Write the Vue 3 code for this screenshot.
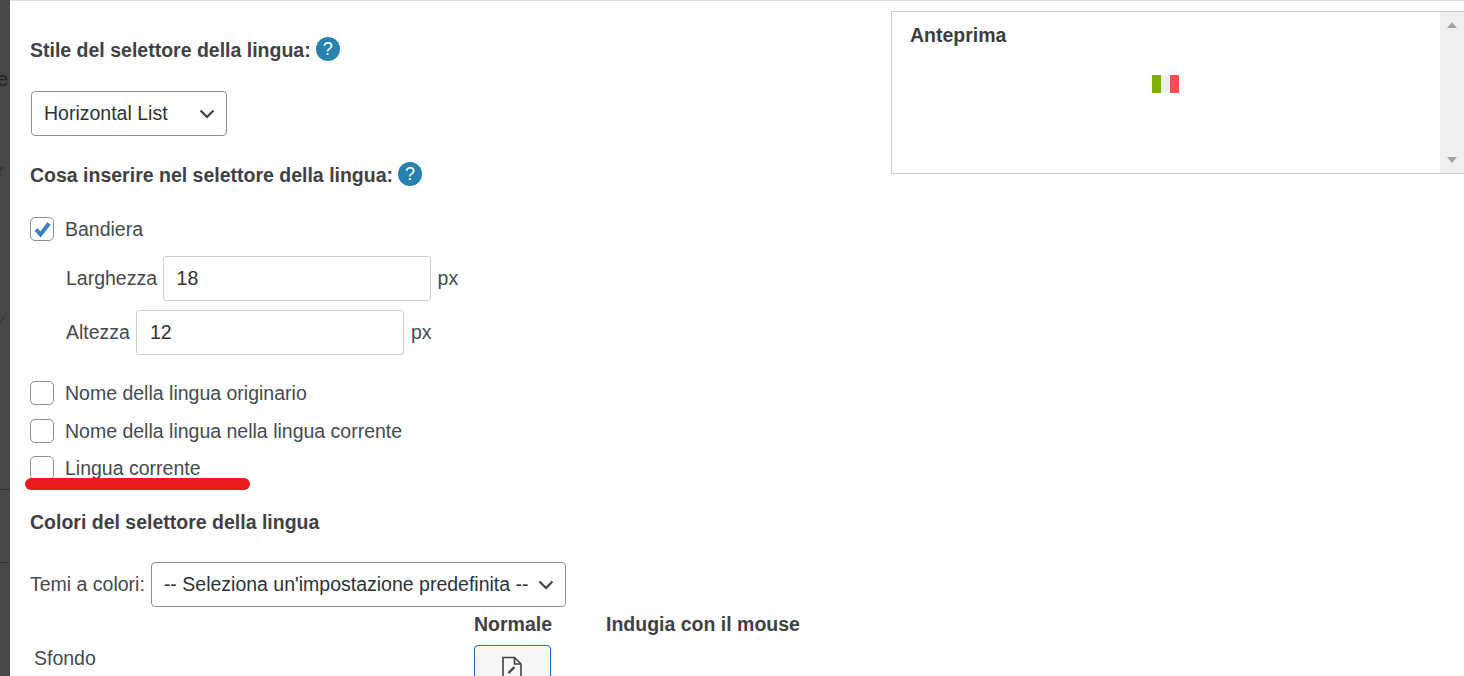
<script setup>
const plainOptions = ['Nome della lingua originario', 'Nome della lingua nella lingua corrente']
</script>

<template>
  <div class="page">
    <aside class="backdrop">
      <span class="ghost g1">e</span>
      <span class="ghost g2">r</span>
      <span class="ghost g3">✓</span>
      <i class="rule r1"></i>
      <i class="rule r2"></i>
    </aside>
    <main class="dialog">
      <section class="form">
        <h3 class="heading first">Stile del selettore della lingua:<span class="help">?</span></h3>
        <div class="select style-select">
          <span>Horizontal List</span>
          <svg class="chev" viewBox="0 0 16 10"><path d="M1.5 1.5 8 8l6.5-6.5" /></svg>
        </div>
        <h3 class="heading second">Cosa inserire nel selettore della lingua:<span class="help">?</span></h3>

        <label class="check flag-row">
          <span class="box">
            <svg viewBox="0 0 22 22"><path d="M5 11.5 9.5 16.5 18 5.5" /></svg>
          </span>
          Bandiera
        </label>
        <div class="size-row width-row">
          <span>Larghezza</span><span class="input">18</span><span class="unit">px</span>
        </div>
        <div class="size-row height-row">
          <span>Altezza</span><span class="input">12</span><span class="unit">px</span>
        </div>

        <label v-for="(o, i) in plainOptions" :key="o" class="check" :class="i === 0 ? 'opt-first' : 'opt-next'">
          <span class="box"></span>{{ o }}
        </label>
        <label class="check opt-last"><span class="box"></span>Lingua corrente</label>

        <h3 class="heading third">Colori del selettore della lingua</h3>
        <div class="theme-row">
          <span>Temi a colori:</span>
          <div class="select theme-select">
            <span>-- Seleziona un'impostazione predefinita --</span>
            <svg class="chev" viewBox="0 0 16 10"><path d="M1.5 1.5 8 8l6.5-6.5" /></svg>
          </div>
        </div>
        <div class="color-head">
          <b class="col-normal">Normale</b>
          <b class="col-hover">Indugia con il mouse</b>
        </div>
        <div class="color-row">
          <span class="color-label">Sfondo</span>
          <button class="picker" type="button">
            <svg viewBox="0 0 22 26"><path class="doc" d="M2 1.5h11.5L20 8v17H2z" /><path class="doc" d="M13.5 1.5V8H20" /><path class="pen" d="M7.5 17l6-6" /></svg>
          </button>
        </div>
        <div class="underline"></div>
      </section>
      <section class="preview">
        <div class="preview-body">
          <h4>Anteprima</h4>
          <div class="flag"><i class="green"></i><i class="white"></i><i class="red"></i></div>
        </div>
        <div class="scrollbar">
          <i class="arrow up"></i>
          <i class="arrow down"></i>
        </div>
      </section>
    </main>
  </div>
</template>

<style>
html, body { margin: 0; background: #fff; overflow: hidden; }
</style>

<style scoped>
.page {
  display: flex;
  width: 1464px;
  height: 676px;
  overflow: hidden;
  font-family: "Liberation Sans", Arial, sans-serif;
  font-size: 19.5px;
  color: #444a50;
  background: #fff;
}
.backdrop {
  position: relative;
  flex: 0 0 10px;
  background: #474747;
  overflow: hidden;
  color: #222;
}
.ghost { position: absolute; right: 2px; font-size: 20px; line-height: 20px; }
.g1 { top: 69px; left: -3px; }
.g2 { top: 161px; left: -3px; color: #2d2d2d; }
.g3 { top: 310px; left: -4px; color: #333; font-size: 14px; }
.rule { position: absolute; left: 0; right: 0; height: 1px; background: #333; }
.r1 { top: 489px; }
.r2 { top: 562px; }
.dialog {
  flex: 1;
  display: flex;
  justify-content: space-between;
  align-items: flex-start;
  border-top: 1px solid #dcdcde;
  min-width: 0;
}
.form {
  position: relative;
  flex: 0 0 860px;
  padding-left: 20px;
}
.heading {
  display: flex;
  align-items: center;
  gap: 5px;
  margin: 0;
  font-size: 19.5px;
  line-height: 24px;
  font-weight: 700;
  color: #3f4145;
  white-space: nowrap;
}
.heading.first { margin-top: 37px; }
.heading.second { margin-top: 27px; }
.heading.third { margin-top: 30px; }
.help {
  display: inline-flex;
  align-items: center;
  justify-content: center;
  width: 24px;
  height: 24px;
  margin-top: -2px;
  border-radius: 50%;
  background: #2681ad;
  color: #fff;
  font-size: 18px;
  font-weight: 400;
}
.select {
  display: flex;
  align-items: center;
  justify-content: space-between;
  box-sizing: border-box;
  height: 45px;
  padding: 0 11px 0 12px;
  border: 1px solid #8c8f94;
  border-radius: 4px;
  background: #fff;
  color: #2c3338;
  white-space: nowrap;
}
.style-select { width: 196px; margin: 29px 0 0 1px; }
.chev { width: 16px; height: 10px; flex: none; fill: none; stroke: #3c434a; stroke-width: 2.2; }
.check {
  display: flex;
  align-items: center;
  gap: 11px;
  height: 24px;
  line-height: 24px;
}
.box {
  box-sizing: border-box;
  width: 24px;
  height: 24px;
  flex: none;
  border: 1px solid #8c8f94;
  border-radius: 5px;
  background: #fff;
}
.box svg { display: block; width: 22px; height: 22px; fill: none; stroke: #3582c4; stroke-width: 4; }
.flag-row { margin-top: 30px; }
.size-row {
  display: flex;
  align-items: center;
  height: 45px;
  padding-left: 36px;
}
.width-row { margin-top: 15px; }
.height-row { margin-top: 9px; }
.width-row .input { margin-left: 5.5px; }
.input {
  box-sizing: border-box;
  display: flex;
  align-items: center;
  width: 268px;
  height: 45px;
  margin-left: 6px;
  padding-left: 13px;
  border: 1px solid #ccd0d4;
  border-radius: 3px;
  color: #2c3338;
}
.unit { margin-left: 7px; }
.opt-first { margin-top: 26px; }
.opt-next { margin-top: 14px; }
.opt-last { margin-top: 13px; }
.theme-row { display: flex; align-items: center; gap: 6px; margin-top: 28px; }
.theme-select { width: 415px; }
.color-head { display: flex; height: 24px; margin-top: 5px; line-height: 24px; color: #3f4145; }
.col-normal { margin-left: 444px; }
.col-hover { margin-left: 54px; }
.color-row { display: flex; align-items: flex-start; height: 60px; margin-top: 9px; padding-left: 4px; }
.color-label { margin-top: 1px; line-height: 24px; }
.picker {
  box-sizing: border-box;
  display: flex;
  justify-content: center;
  align-items: flex-start;
  flex: none;
  width: 77px;
  height: 44px;
  margin-left: 378px;
  padding: 10px 0 0;
  border: 1px solid #2271b1;
  border-radius: 4px;
  background: #f6f7f7;
}
.picker svg { display: block; width: 22px; height: 26px; fill: none; }
.doc { stroke: #3c434a; stroke-width: 1.6; }
.pen { stroke: #3c434a; stroke-width: 2.4; }
.underline {
  position: absolute;
  left: 15px;
  top: 477px;
  width: 225px;
  height: 12px;
  border-radius: 6px;
  background: #ea1c1f;
}
.preview {
  box-sizing: border-box;
  display: flex;
  flex: 0 0 573px;
  height: 163px;
  margin-top: 10px;
  border: 1px solid #ccc;
  border-right: 0;
}
.preview-body { flex: 1; padding: 11px 18px 0; }
.preview-body h4 {
  margin: 0;
  font-size: 19.5px;
  line-height: 24px;
  font-weight: 700;
  color: #3c3c3c;
}
.flag {
  display: flex;
  width: 27px;
  height: 18px;
  margin: 28px 0 0 242px;
}
.flag i { flex: 1; }
.green { background: #7fae00; }
.white { background: #eef0ee; }
.red { background: #ff4b55; }
.scrollbar {
  position: relative;
  flex: 0 0 24px;
  background: #f0f0f0;
}
.arrow { position: absolute; left: 7px; width: 0; height: 0; border-left: 5.5px solid transparent; border-right: 5.5px solid transparent; }
.up { top: 10px; border-bottom: 6px solid #a3a3a3; }
.down { bottom: 10px; border-top: 6px solid #a3a3a3; }
</style>
